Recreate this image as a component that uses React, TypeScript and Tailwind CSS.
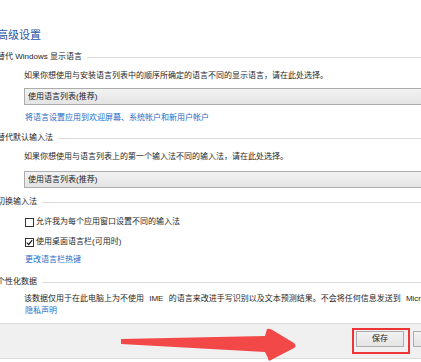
import React from "react";

const font = { fontFamily: '"Liberation Sans", "Noto Sans CJK SC", sans-serif' };

function Heading({ text }: { text: string }) {
  return (
    <div className="flex items-center h-[12px] ml-[-3px] text-[8px] leading-[12px] text-[#1e1e1e] whitespace-nowrap">
      <span>{text}</span>
      <div className="flex-1 h-px bg-[#dadada] ml-[5px]" />
    </div>
  );
}

function Text({ text, className = "" }: { text: string; className?: string }) {
  return (
    <div className={"h-[12px] pl-[24px] text-[8px] leading-[12px] text-[#1f1f1f] whitespace-nowrap overflow-hidden " + className}>
      {text}
    </div>
  );
}

function Link({ text, className = "" }: { text: string; className?: string }) {
  return (
    <div className={"h-[12px] pl-[25px] text-[8px] leading-[12px] text-[#1c6cc9] whitespace-nowrap " + className}>
      {text}
    </div>
  );
}

function Dropdown({ className = "" }: { className?: string }) {
  return (
    <div
      className={
        "ml-[24px] mr-[-4px] h-[17px] border border-[#acacac] bg-gradient-to-b from-[#f2f2f2] to-[#e4e4e4] flex items-center pl-[3px] text-[8px] text-[#222] " +
        className
      }
    >
      使用语言列表(推荐)
    </div>
  );
}

function Check({ checked, text, className = "" }: { checked?: boolean; text: string; className?: string }) {
  return (
    <div className={"flex items-center h-[12px] pl-[25px] text-[8px] leading-[12px] text-[#1f1f1f] " + className}>
      <div className="w-[9px] h-[9px] border border-[#333] bg-white flex items-center justify-center mr-[2px]">
        {checked && (
          <svg width="7" height="7" viewBox="0 0 7 7">
            <path d="M0.8 3.6 L2.7 5.5 L6.2 1.2" fill="none" stroke="#222" strokeWidth="1.2" />
          </svg>
        )}
      </div>
      <span>{text}</span>
    </div>
  );
}

export default function App() {
  return (
    <div className="relative w-[421px] h-[362px] overflow-hidden bg-white" style={font}>
      <div className="flex flex-col">
        <div className="mt-[29px] ml-[-3px] h-[12px] text-[11px] leading-[12px] text-[#1f56a6]">高级设置</div>
        <div className="mt-[10px]">
          <Heading text="替代 Windows 显示语言" />
        </div>
        <Text className="mt-[7px]" text="如果你想使用与安装语言列表中的顺序所确定的语言不同的显示语言，请在此处选择。" />
        <Dropdown className="mt-[6px]" />
        <Link className="mt-[7px]" text="将语言设置应用到欢迎屏幕、系统帐户和新用户帐户" />
        <div className="mt-[8px]">
          <Heading text="替代默认输入法" />
        </div>
        <Text className="mt-[7px]" text="如果你想使用与语言列表上的第一个输入法不同的输入法，请在此处选择。" />
        <Dropdown className="mt-[8px]" />
        <div className="mt-[8px]">
          <Heading text="切换输入法" />
        </div>
        <Check className="mt-[8px]" text="允许我为每个应用窗口设置不同的输入法" />
        <Check className="mt-[8px]" checked text="使用桌面语言栏(可用时)" />
        <Link className="mt-[6px] pl-[24px]" text="更改语言栏热键" />
        <div className="mt-[10px]">
          <Heading text="个性化数据" />
        </div>
        <Text className="mt-[5px] [word-spacing:3px]" text="该数据仅用于在此电脑上为不使用 IME 的语言来改进手写识别以及文本预测结果。不会将任何信息发送到 Microsoft。" />
        <Link className="mt-0 pl-[24px]" text="隐私声明" />
        <div className="mt-[6px] h-[36px] border-t border-b border-[#dcdcdc] bg-[#f0f0f0] flex items-start justify-end pt-[7px] gap-[9px] mr-[-20px]">
          <div className="w-[48px] h-[16px] border border-[#adadad] bg-gradient-to-b from-[#f2f2f2] to-[#e4e4e4] flex items-center justify-center text-[8px] text-[#222]">
            保存
          </div>
          <div className="w-[28px] h-[16px] border border-[#adadad] bg-gradient-to-b from-[#f2f2f2] to-[#e4e4e4]" />
        </div>
      </div>

      {/* red highlight rectangle */}
      <div className="absolute left-[352px] top-[328px] w-[58px] h-[26px] border-2 border-[#ee3434]" />

      {/* red arrow annotation */}
      <svg className="absolute left-0 top-0" width="421" height="362" viewBox="0 0 421 362">
        <path
          d="M121 339 L265 336 L267 329 Q270 328 274 331 L294 343 Q297 346 294 348 L271 360 Q268 362 268 358 L265 352 L121 344 Z"
          fill="#f24848"
        />
      </svg>
    </div>
  );
}
